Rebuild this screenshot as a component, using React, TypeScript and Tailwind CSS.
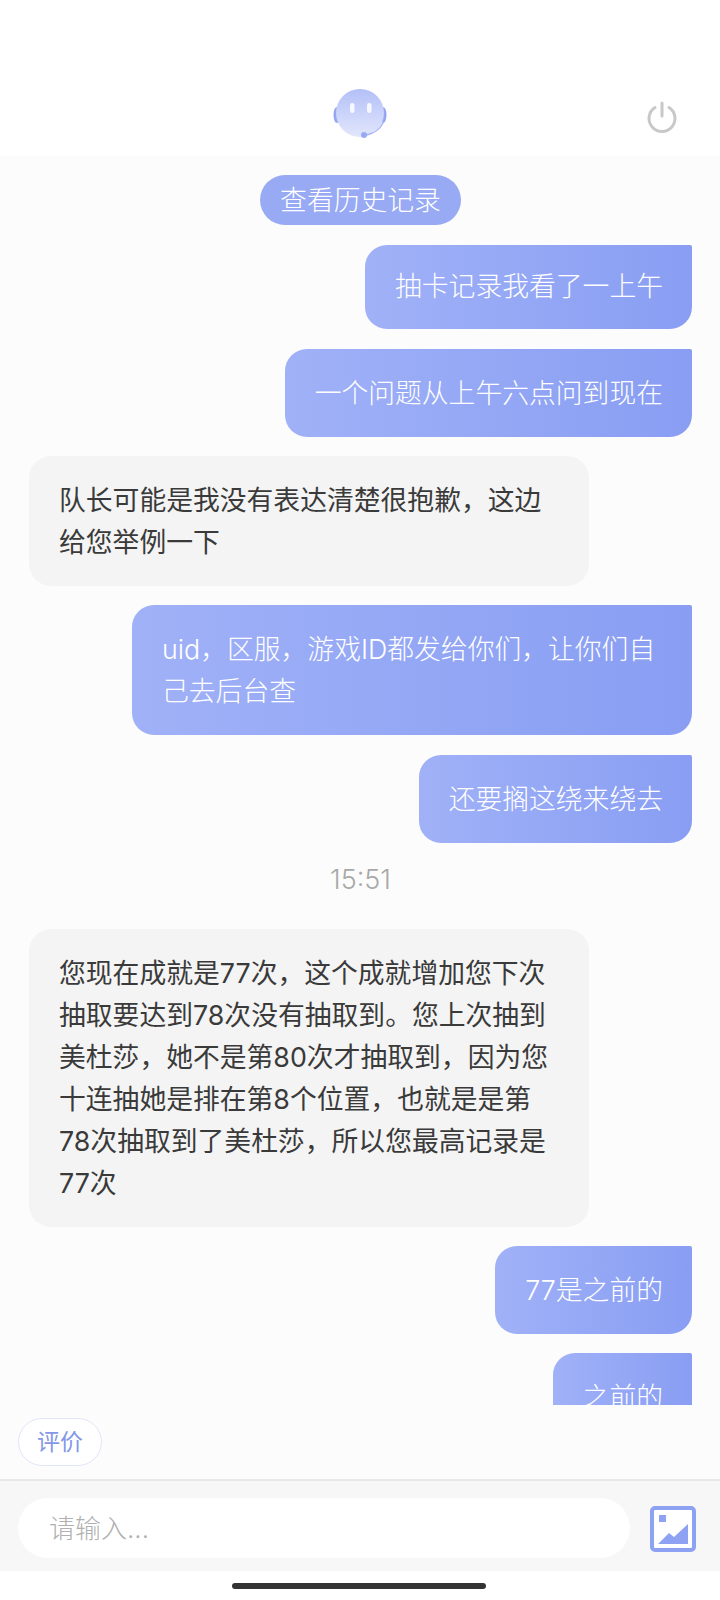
import React from 'react';

const fontStack = '[font-family:Inter,"Noto_Sans_CJK_SC",sans-serif]';

const Outgoing = ({ text, className }: { text: React.ReactNode; className: string }) => (
  <div className={`self-end flex items-center rounded-[22px] rounded-tr-[2px] bg-linear-to-r from-[#a0b1f7] to-[#899ef3] pl-[30px] pr-[29px] text-[26.8px] font-light leading-[42px] text-white ${className}`}>
    <div>{text}</div>
  </div>
);

const Incoming = ({ children, className }: { children: React.ReactNode; className: string }) => (
  <div className={`self-start w-[560px] flex items-center rounded-[22px] bg-[#f4f4f4] pl-[30px] text-[26.8px] leading-[42px] text-[#3a3a3a] ${className}`}>
    <div>{children}</div>
  </div>
);

const RobotAvatar = () => (
  <svg width="56" height="52" viewBox="0 0 56 52" className="blur-[0.6px]">
    <defs>
      <linearGradient id="face" x1="0" y1="0" x2="0" y2="1">
        <stop offset="0" stopColor="#b3c0f8" />
        <stop offset="1" stopColor="#e2e6fc" />
      </linearGradient>
    </defs>
    <ellipse cx="5" cy="28" rx="3.5" ry="8" fill="#93a6f4" />
    <ellipse cx="51" cy="28" rx="3.5" ry="8" fill="#93a6f4" />
    <circle cx="28" cy="26" r="24" fill="url(#face)" />
    <rect x="18" y="16" width="4.5" height="10" rx="2.2" fill="#f7f8ff" />
    <rect x="35" y="16" width="4.5" height="10" rx="2.2" fill="#f7f8ff" />
    <path d="M51 36 C48 42 44 46 34 48" fill="none" stroke="#a3b3f6" strokeWidth="1.5" />
    <circle cx="32" cy="48" r="3" fill="#98aaf4" />
  </svg>
);

const PowerIcon = () => (
  <svg width="32" height="32" viewBox="0 0 32 32" fill="none" stroke="#c8c8c8" strokeWidth="3" strokeLinecap="round">
    <path d="M9 6.5 A13 13 0 1 0 23 6.5" />
    <path d="M16 2 V15" />
  </svg>
);

const ImageIcon = () => (
  <svg width="46" height="46" viewBox="0 0 46 46">
    <rect x="2" y="2" width="42" height="42" rx="3" fill="#ffffff" stroke="#8ea2f3" strokeWidth="4" />
    <rect x="9" y="9" width="7" height="7" fill="#8ea2f3" />
    <path d="M8 38 L19 27 L24 31 L38 18 V38 Z" fill="#8ea2f3" />
  </svg>
);

export default function App() {
  return (
    <div lang="zh-CN" className={`flex h-[1600px] w-[720px] flex-col bg-white ${fontStack}`}>
      {/* header */}
      <div className="relative flex h-[156px] shrink-0 items-end justify-center pb-[17px]">
        <RobotAvatar />
        <div className="absolute right-[42px] top-[101px]">
          <PowerIcon />
        </div>
      </div>

      {/* chat */}
      <div className="flex h-[1323px] shrink-0 flex-col bg-[#fcfcfc]">
        <div className="flex h-[1249px] flex-col overflow-hidden pl-[29px] pr-[28px] pt-[19px]">
          <div className="flex h-[50px] w-[201px] shrink-0 items-center justify-center self-center rounded-full bg-[#98aaf4] text-[26.8px] font-light text-white">
            查看历史记录
          </div>
          <Outgoing className="mt-[20px] h-[84px] shrink-0 pb-[2px]" text="抽卡记录我看了一上午" />
          <Outgoing className="mt-[20px] h-[88px] shrink-0" text="一个问题从上午六点问到现在" />
          <Incoming className="mt-[19px] h-[130px] shrink-0">
            队长可能是我没有表达清楚很抱歉，这边
            <br />
            给您举例一下
          </Incoming>
          <Outgoing
            className="mt-[19px] h-[130px] w-[560px] shrink-0"
            text={
              <>
                uid，区服，游戏ID都发给你们，让你们自
                <br />
                己去后台查
              </>
            }
          />
          <Outgoing className="mt-[20px] h-[88px] shrink-0" text="还要搁这绕来绕去" />
          <div className="mt-[21px] flex h-[32px] shrink-0 items-center justify-center text-[27px] font-light text-[#a8a8a8]">15:51</div>
          <Incoming className="mt-[33px] h-[298px] shrink-0">
            您现在成就是77次，这个成就增加您下次
            <br />
            抽取要达到78次没有抽取到。您上次抽到
            <br />
            美杜莎，她不是第80次才抽取到，因为您
            <br />
            十连抽她是排在第8个位置，也就是是第
            <br />
            78次抽取到了美杜莎，所以您最高记录是
            <br />
            77次
          </Incoming>
          <Outgoing className="mt-[19px] h-[88px] shrink-0" text="77是之前的" />
          <Outgoing className="mt-[19px] h-[88px] shrink-0" text="之前的" />
        </div>
        <div className="pl-[18px] pt-[13px]">
          <div className="flex h-[48px] w-[84px] items-center justify-center rounded-[24px] border border-[#e3e6f8] bg-white text-[23px] text-[#8497e8]">
            评价
          </div>
        </div>
      </div>

      {/* input bar */}
      <div className="flex h-[92px] shrink-0 items-center border-t-2 border-[#e8e8e8] bg-[#f7f7f7] pl-[18px] pr-[24px] pt-[4px]">
        <div className="flex h-[60px] w-[612px] items-center rounded-[30px] bg-white pl-[31px] text-[26px] font-light text-[#b0b0b0]">
          请输入...
        </div>
        <div className="ml-[20px] mt-[1px]">
          <ImageIcon />
        </div>
      </div>

      {/* home indicator */}
      <div className="flex flex-1 items-center justify-center pr-[2px] pt-[1px]">
        <div className="h-[6px] w-[254px] rounded-full bg-[#333333]" />
      </div>
    </div>
  );
}
